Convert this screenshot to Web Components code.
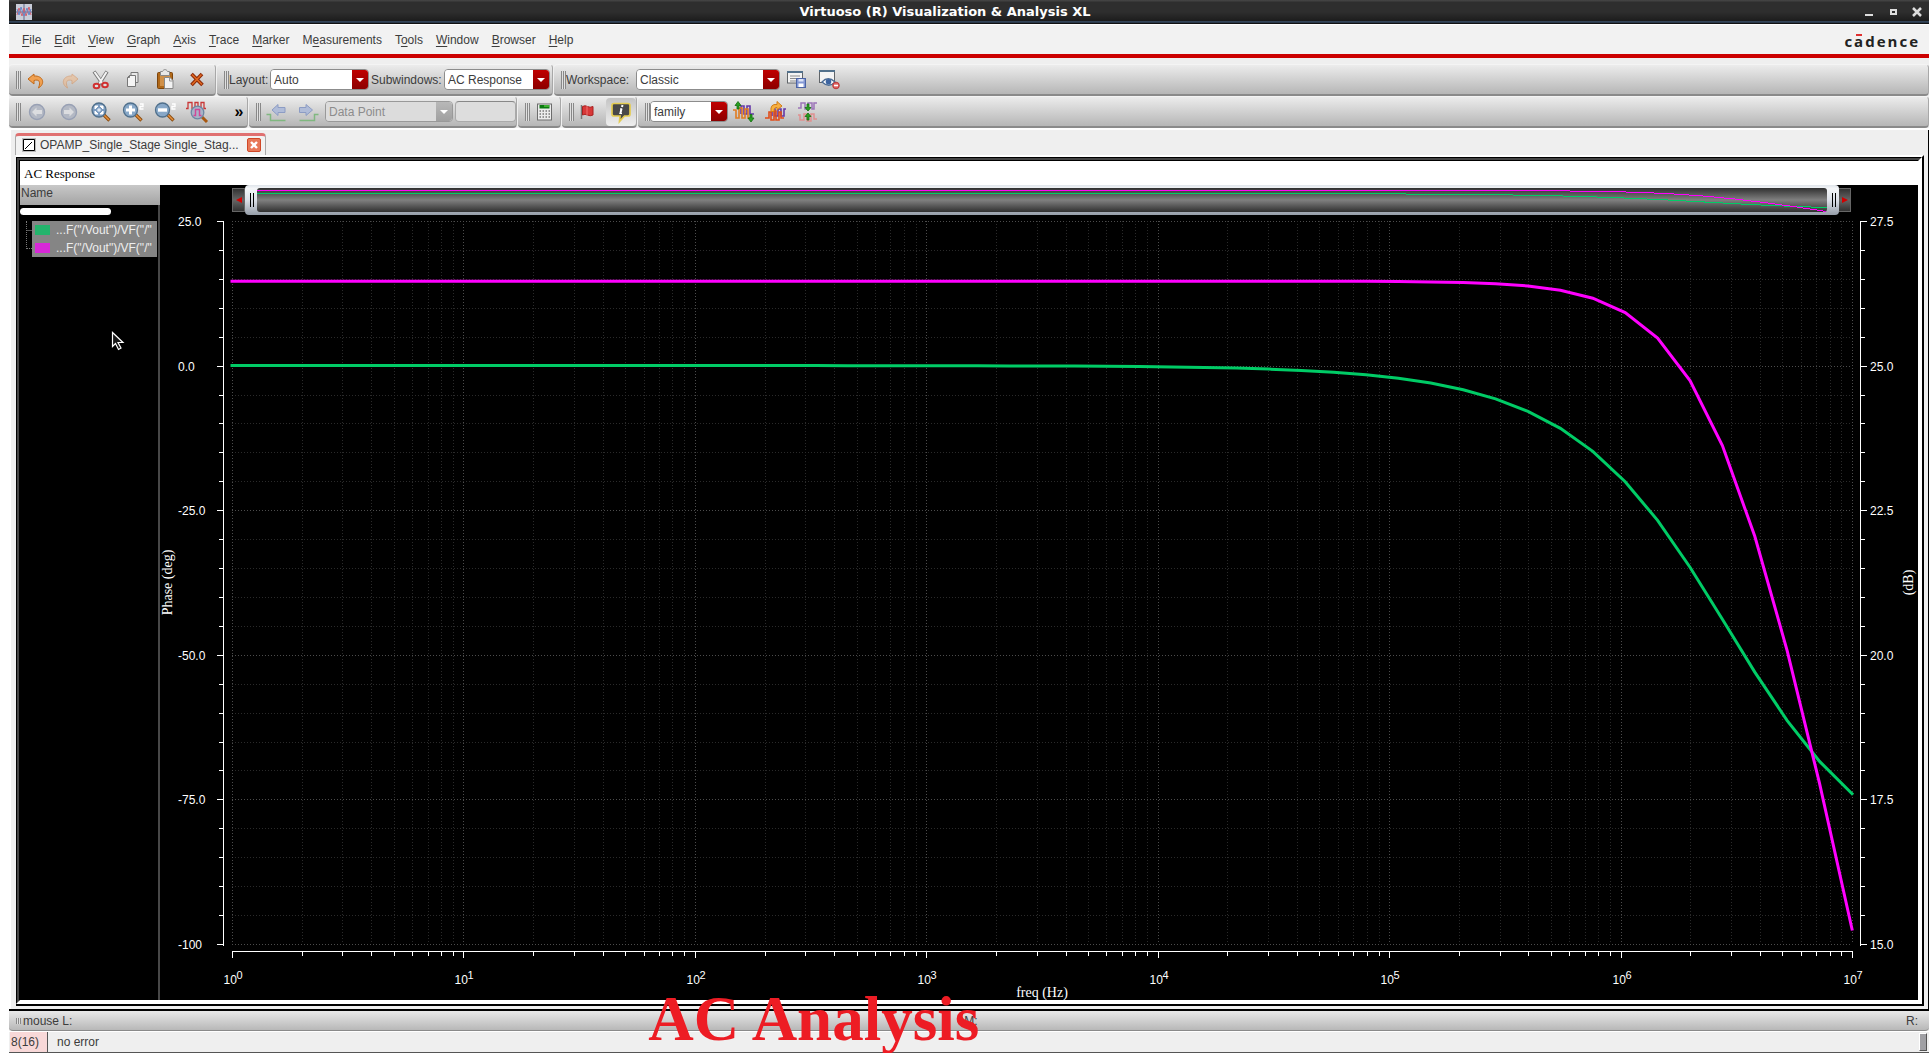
<!DOCTYPE html>
<html lang="en">
<head>
<meta charset="utf-8">
<title>Virtuoso (R) Visualization &amp; Analysis XL</title>
<style>
html,body{margin:0;height:100%;background:#fff;overflow:hidden}
body{font:12px/16px "Liberation Sans",Arial,sans-serif;color:#3c3c3c}
</style>
</head>
<body>
<viva-app></viva-app>
<script>
const ICONS = {
undo:'<path d="M9 6 3 11l6 5v-3.500c5-1.500 7 1 4.500 7.500 7-4 5-12.500-4.500-12z" fill="#f0a050" stroke="#c06818"/>',
redo:'<g opacity=".55"><path d="M15 6l6 5-6 5v-3.500c-5-1.500-7 1-4.500 7.500-7-4-5-12.500 4.500-12z" fill="#f0b888" stroke="#d89058"/></g>',
cut:'<path d="M5 3.500 14.500 17M18 3.500 9.500 17" stroke="#777" stroke-width="3.600"/><path d="M5.500 4 14 16M17.500 4 10 16" stroke="#f4f4f4" stroke-width="2"/><ellipse cx="7.500" cy="18" rx="2.800" ry="2.300" fill="#ddd" stroke="#d03030" stroke-width="2"/><ellipse cx="16" cy="17" rx="2.800" ry="2.300" fill="#ddd" stroke="#d03030" stroke-width="2"/>',
copy:'<path d="M10 4.500h7v10h-7z" fill="#e8e8e8" stroke="#777"/><path d="M6.500 9.500l2-2h6v11h-8z" fill="#f4f4f4" stroke="#777"/><path d="M6.500 9.500h2v-2" fill="none" stroke="#777"/>',
paste:'<rect x="4.500" y="4.500" width="15" height="16" rx="1" fill="#b06818" stroke="#7c440c"/><rect x="7" y="7" width="10" height="11" fill="#d09048"/><path d="M7.500 3.500h2c1-2.500 4-2.500 5 0h2v4h-9z" fill="#e8e8e8" stroke="#888"/><path d="M11.500 9.500h5.500l3 3v8h-8.500z" fill="#f2f2f2" stroke="#888"/><path d="M16.500 9.500v3.500H20" fill="none" stroke="#999"/>',
del:'<path d="M6.500 6 17.500 17M17 6 6.500 17" stroke="#8a2808" stroke-width="3.600"/><path d="M7 6.500 17 16.500M16.500 6.500 7 16.500" stroke="#e06820" stroke-width="1.600"/>',
back:'<circle cx="12" cy="12" r="7.500" fill="#b4b9c4" stroke="#98a0b4" stroke-width="1.400"/><path d="M11.500 7.500 7 12l4.500 4.500V14H17v-4h-5.500z" fill="#dcdde0"/>',
fwd:'<circle cx="12" cy="12" r="7.500" fill="#b4b9c4" stroke="#98a0b4" stroke-width="1.400"/><path d="M12.500 7.500 17 12l-4.500 4.500V14H7v-4h5.500z" fill="#dcdde0"/>',
fit:'<path d="M14 14l6.500 6.500" stroke="#8a4c10" stroke-width="3.400"/><path d="M14 14l6 6" stroke="#e8903c" stroke-width="1.400"/><circle cx="10" cy="10" r="7" fill="#7c9cc0" stroke="#50708c" stroke-width="1.300"/><path d="M6 6h3L6 9zM14 6v3l-3-3zM6 14v-3l3 3zM14 14h-3l3-3z" fill="#fff" stroke="#fff"/><circle cx="10" cy="10" r="1.800" fill="#dce8f4"/>',
zin:'<path d="M14 14l6.500 6.500" stroke="#8a4c10" stroke-width="3.400"/><path d="M14 14l6 6" stroke="#e8903c" stroke-width="1.400"/><circle cx="9.500" cy="10" r="7" fill="#88a8c8" stroke="#50708c" stroke-width="1.300"/><path d="M9.500 5.500v9M5 10h9" stroke="#fff" stroke-width="3"/><path d="M19 4h3v2.500h-3V9h3.500" fill="none" stroke="#fff" stroke-width="1.400"/>',
zout:'<path d="M14 14l6.500 6.500" stroke="#8a4c10" stroke-width="3.400"/><path d="M14 14l6 6" stroke="#e8903c" stroke-width="1.400"/><circle cx="9.500" cy="10" r="7" fill="#88a8c8" stroke="#50708c" stroke-width="1.300"/><path d="M5 10h9" stroke="#fff" stroke-width="3.400"/><path d="M19 4h3v2.500h-3V9h3.500" fill="none" stroke="#fff" stroke-width="1.400"/>',
zwave:'<path d="M1 8.500h2v-6h4v6h3v-6h3v6h3v-6h3v6h2" fill="none" stroke="#c83838" stroke-width="1.300"/><path d="M16 16l6 6" stroke="#a85810" stroke-width="3"/><circle cx="12.500" cy="12.500" r="6.300" fill="#a8b4c8" stroke="#6c88a4" stroke-width="1.300"/><path d="M8.500 15.500h2v-6h4v6h2" fill="none" stroke="#d04898" stroke-width="1.500"/>',
prev:'<path d="M1.500 14.500h4v6h15" fill="none" stroke="#80b880" stroke-width="1.500"/><path d="M13 4.500 7 10l6 5.500v-3h7v-5h-7z" fill="#b0bcd8" stroke="#8c9cc4"/>',
next:'<path d="M21.500 14.500h-4v6h-15" fill="none" stroke="#80b880" stroke-width="1.500"/><path d="M9 4.500l6.500 5.500L9 15.500v-3H2.500v-5H9z" fill="#b0bcd8" stroke="#8c9cc4"/>',
calc:'<rect x="5.500" y="4" width="14" height="16" fill="#ececec" stroke="#6c6c6c"/><rect x="7.500" y="5" width="10" height="3.500" fill="#0b7a10"/><path d="M12 6h5" stroke="#70e850"/><path d="M7.500 11h10.500M7.500 14h10.500M7.500 17h10.500" stroke="#777" stroke-width="1.500" stroke-dasharray="1.500 1.500"/>',
flag:'<path d="M6.500 5v14" stroke="#777" stroke-width="1.500"/><path d="M7.500 6.500q2.500-1.500 5 0t5.500 0V15q-3 1.500-5.500 0t-5 0z" fill="#d83838" stroke="#a82020"/><path d="M12 6v9.500" stroke="#f07070"/>',
info:'<path d="M5 3.500h14q2 0 2 2V14q0 2-2 2h-3.500l-5 5.500.5-5.500H5q-2 0-2-2V5.500q0-2 2-2z" fill="#484848" stroke="#e4cc50" stroke-width="1.700"/><path d="M13.500 5l-.5 2M12.500 8.500l-1.200 5.500" stroke="#fff" stroke-width="2"/><path d="M11 9h2M10.500 13.500h2.500" stroke="#fff"/>',
save:'<rect x="1.500" y="3.500" width="15" height="11.500" fill="#f4f4f4" stroke="#606468"/><path d="M1 4h16" stroke="#52718c" stroke-width="2"/><path d="M4 8h10M4 10.500h10M4 13h6" stroke="#8c8c8c"/><rect x="10.500" y="10.500" width="9" height="9" fill="#8498d4" stroke="#4c64a4"/><rect x="12.500" y="15.500" width="5" height="3.500" fill="#fff"/><rect x="12.500" y="11" width="5" height="2.500" fill="#dce4f8"/>',
view:'<rect x="1.500" y="2.500" width="15" height="12" fill="#f4f4f4" stroke="#606468"/><path d="M1 3h16" stroke="#52718c" stroke-width="2"/><path d="M4 14q6-6.500 13 0-6 6.500-13 0z" fill="#fff" stroke="#4c6c94" stroke-width="1.300"/><circle cx="10.500" cy="13.800" r="2.800" fill="#3c64a0"/><circle cx="18" cy="17.500" r="3.300" fill="#e06060" stroke="#b83838"/><path d="M16 17.500h4" stroke="#fff" stroke-width="1.600"/>',
strips:'<path d="M9 14V6h3v8h3V6h3v8h4" fill="none" stroke="#6438a8" stroke-width="1.600"/><path d="M1 10h3v8h3V8h3v10h3V9h3v9h3" fill="none" stroke="#e07c20" stroke-width="1.600"/><path d="M6 1.500 9 5.500H7V9H5V5.500H3zM19 22l-3-4h2v-3.500h2V18h2z" fill="#28a020" stroke="#146c10" stroke-width=".8"/>',
combine:'<path d="M8 16V9h3v7h3V9h3v7h3V9h2" fill="none" stroke="#6438a8" stroke-width="1.600"/><path d="M1 18h4v-6h2v8h3v-9h2v9h3v-8h2v6h3" fill="none" stroke="#e04c18" stroke-width="1.600"/><path d="M7 11.500q-1-8 6-7V1.500L18 6l-5 4V7.500q-3-.5-3 4z" fill="#f8b040" stroke="#d07c18"/>',
split:'<path d="M2 8h3V3h4v6h3V3h4v6h2V3h3" fill="none" stroke="#9c74b8" stroke-width="1.500"/><path d="M2 15h2v5h4v-6h3v7h4v-7h3v5h3" fill="none" stroke="#e09090" stroke-width="1.500"/><path d="M12 11 9 7.500h2V4h2v3.500h2zM12 13l3 3.500h-2V20h-2v-3.500H9z" fill="#28a020" stroke="#146c10" stroke-width=".8"/>'
};
const define=(name,html,setup)=>{
  const t=document.createElement('template');t.innerHTML=html;
  customElements.define(name,class extends HTMLElement{
    connectedCallback(){
      if(this.shadowRoot)return;
      this.attachShadow({mode:'open'}).append(t.content.cloneNode(true));
      if(setup)setup(this,this.shadowRoot);
    }
  });
};
const SVGN='http://www.w3.org/2000/svg';
const svgEl=(svg,n,a,text)=>{const e=document.createElementNS(SVGN,n);for(const k in a)e.setAttribute(k,a[k]);if(text!=null)e.textContent=text;svg.append(e);return e;};

/* Single pole response sampled at 50 intervals over 7 decades */
const POLE=2.865e6;
const SAMPLES=Array.from({length:51},(_,i)=>{
  const d=i*7/50,r=10**d/POLE;
  return{d,phase:-Math.atan(r)*180/Math.PI,gain:26.46-10*Math.log10(1+r*r)};
});

define('viva-icon-button',`<style>
:host{display:block}
button{display:grid;place-items:center;width:var(--w,32px);height:30px;padding:0;border:0;border-radius:4px;background:none}
:host([pressed]) button{width:30px;height:28px;background:linear-gradient(#c4c4c4,#efefef)}
svg{display:block;width:24px;height:24px;fill:none}
</style><button type="button"><svg viewBox="0 0 24 24"></svg></button>`,(h,r)=>{
  r.querySelector('svg').innerHTML=ICONS[h.getAttribute('icon')];
  r.querySelector('button').setAttribute('aria-label',h.getAttribute('icon'));
});

define('viva-combo',`<style>
:host{display:flex;align-items:center;gap:1px}
label{white-space:nowrap;min-width:var(--label,0)}
label:empty{display:none}
.box{display:grid;width:var(--w);box-sizing:border-box;height:21px;border:1px solid #8c8c8c;border-radius:4px;overflow:hidden;background:#fff}
.box>*{grid-area:1/1}
select{appearance:none;border:0;margin:0;padding:0 18px 0 3px;width:100%;font:inherit;color:#3c3c3c;background:linear-gradient(#c00000,#8c0000) right/16px 100% no-repeat #fff;opacity:1}
i{justify-self:end;align-self:center;margin-right:4px;border:4px solid transparent;border-top-color:#fff;border-bottom:0;pointer-events:none}
:host([disabled]) .box{background:#ddd;border-color:#999}
:host([disabled]) select{color:#8c8c8c;background:linear-gradient(#b8b8b8,#a0a0a0) right/16px 100% no-repeat #dcdcdc}
</style><label for="s"></label><div class="box"><select id="s"><option></option></select><i></i></div>`,(h,r)=>{
  r.querySelector('label').textContent=h.getAttribute('label')||'';
  r.querySelector('option').textContent=h.getAttribute('value');
  const s=r.querySelector('select');
  s.disabled=h.hasAttribute('disabled');
  if(!h.hasAttribute('label'))s.setAttribute('aria-label',h.getAttribute('value'));
});

define('viva-toolgroup',`<style>
:host{display:flex;align-items:center;box-sizing:border-box;height:32px;padding:0 var(--end,2px) 0 7px;border-bottom:2px solid #8a8a8a;border-top:1px solid #f4f4f4;border-right:1px solid #a8a8a8;border-radius:4px;background:linear-gradient(#ececec,#b6b6b6)}
:host([grow]){flex:1}
.grip{flex:none;width:5px;height:18px;background:repeating-linear-gradient(90deg,#888 0 1px,#e0e0e0 1px 2px)}
</style><div class="grip"></div><slot></slot>`);

define('viva-titlebar',`<style>
:host{display:flex;align-items:center;height:24px;box-sizing:border-box;padding:0 7px;color:#fff;background:linear-gradient(#484848,#2e2e2e 10%,#2e2e2e 50%,#1c1c1c 88%,#4a6a90 91%,#111 96%)}
h1{flex:1;margin:0;text-align:center;font:bold 13px/20px "DejaVu Sans",sans-serif}
.logo{width:16px;height:16px;flex:none}
nav{display:flex;justify-content:flex-end;gap:14px;width:64px}
button{width:10px;height:12px;padding:0;border:0;background:none;display:grid;place-items:center}
button svg{width:10px;height:10px;fill:none;stroke:#ddd;stroke-width:2}
</style>
<svg class="logo" viewBox="0 0 16 16"><rect width="16" height="16" fill="#c8ccd8"/><path d="M8 0v16M0 8h16" stroke="#606888"/><path d="M1 11 3 4l3 8 2-8 2 8 3-9 2 8" fill="none" stroke="#d06070"/><path d="M1 5l2 6 2-8 3 9 3-8 2 7 2-6" fill="none" stroke="#6888c8"/></svg>
<h1>Virtuoso (R) Visualization &amp; Analysis XL</h1>
<nav><button aria-label="Minimize"><svg><path d="M1 8h8"/></svg></button><button aria-label="Maximize"><svg><path d="M3 3h5v4H3z"/></svg></button><button aria-label="Close"><svg><path d="M1 1l8 8M9 1 1 9" stroke-width="2.500"/></svg></button></nav>`);

define('viva-menubar',`<style>
:host{display:flex;align-items:center;justify-content:space-between;height:34px;box-sizing:border-box;padding:0 11px 0 13px;background:#f2f2f2;border-top:1px solid #fff;border-bottom:4px solid #c00}
nav{display:flex;gap:13px}
button{font:inherit;color:inherit;border:0;padding:0;background:none}
u{text-underline-offset:2px}
.brand{font:bold 15px/24px "Open Sans",sans-serif;color:#222;display:flex;gap:2px;padding-top:3px}
.a{background:linear-gradient(#e03030,#e03030) center 5px/6px 2px no-repeat}
</style><nav></nav><div class="brand"><span>c</span><span class="a">a</span><span>d</span><span>e</span><span>n</span><span>c</span><span>e</span></div>`,(h,r)=>{
  r.querySelector('nav').innerHTML=['_File','_Edit','_View','_Graph','_Axis','_Trace','_Marker','M_easurements','T_ools','_Window','_Browser','_Help']
    .map(m=>`<button type="button">${m.replace(/_(.)/,'<u>$1</u>')}</button>`).join('');
});

define('viva-tab',`<style>
:host{display:flex;align-items:center;box-sizing:border-box;width:251px;height:22px;margin-left:-1px;padding:0 4px 2px 6px;gap:4px;border:1px solid #aaa;border-top:3px solid #e07070;border-bottom:0;border-radius:4px 4px 0 0;background:#f2f2f2;white-space:nowrap}
svg{flex:none;width:14px;height:14px}
span{flex:1}
button{flex:none;width:14px;height:14px;padding:0;border:1px solid #d04828;border-radius:2px;background:#e87858;display:grid;place-items:center}
button svg{width:8px;height:8px}
</style><svg viewBox="0 0 14 14"><path d="M0 0h14v14H0z" fill="#bbb"/><path d="M1.500 1.500h11v11h-11z" fill="#fff" stroke="#000"/><path d="M3 11 10 4" stroke="#000"/></svg><span><slot></slot></span><button aria-label="Close tab"><svg><path d="M1 1l6 6M7 1 1 7" stroke="#fff" stroke-width="2.400"/></svg></button>`);

define('viva-legend',`<style>
:host{display:block;width:138px;border-right:2px solid #484848;background:#000}
h2{margin:0 -2px 0 0;height:20px;padding-left:1px;font:inherit;line-height:16px;background:linear-gradient(#c8c8c8,#a4a4a4)}
.scroll{width:91px;height:7px;margin:3px 0 6px;border-radius:4px;background:#fff}
ul{list-style:none;margin:0 1px 0 6px;padding:0 0 0 6px;position:relative}
ul::before{content:"";position:absolute;left:0;top:0;width:5px;height:27px;border:1px dotted #777;border-width:0 0 1px 1px;background:linear-gradient(#555,#555) 0 9px/100% 1px no-repeat}
li{display:flex;align-items:center;gap:6px;height:18px;padding-left:3px;color:#eee;background:#858585;overflow:hidden;white-space:nowrap}
li i{flex:none;width:15px;height:10px;background:var(--c)}
.cursor{display:block;width:14px;height:20px;margin:74px 0 0 91px}
</style><h2>Name</h2><div class="scroll"></div>
<ul><li style="--c:#24b46c"><i></i>...F("/Vout")/VF("/"</li><li style="--c:#d828d8"><i></i>...F("/Vout")/VF("/"</li></ul>
<svg class="cursor" viewBox="0 0 14 20"><path d="M1.500 1.500v14l3-3 3 6 2.500-1.500-3-5.500H12z" fill="#181818" stroke="#fff" stroke-width="1.200"/></svg>`);

define('viva-range',`<style>
:host{display:flex;align-items:center;height:30px;padding:0 67px 0 72px}
.end{flex:none;display:grid;place-items:center;width:11px;height:22px;border:1px solid #666;background:linear-gradient(#333,#666,#333)}
.end svg{width:6px;height:6px;fill:#d00000}
.end:first-child{border-right:0}.end:last-child{border-left:0}
.thumb{flex:1;display:flex;box-sizing:border-box;height:30px;border-radius:4px;padding:3px 0 3px;background:linear-gradient(#dfe4ea,#f4f6f8 12%,#dce0e8 50%,#959da8)}
.grip{flex:none;width:12px;height:14px;align-self:center;background:linear-gradient(#000,#000) 5px 0/1px 100% no-repeat,linear-gradient(#000,#000) 8px 0/1px 100% no-repeat}
.track{flex:1;min-width:0;height:24px;border-radius:3px;background:linear-gradient(#303030,#808080 50%,#303030);overflow:hidden}
.track svg{display:block;width:100%;height:24px;fill:none;shape-rendering:crispEdges}
</style><div class="end"><svg viewBox="0 0 6 6"><path d="M0 3 6 0v6z"/></svg></div><div class="thumb"><div class="grip"></div><div class="track"><svg preserveAspectRatio="none" viewBox="0 0 7 24"></svg></div><div class="grip"></div></div><div class="end"><svg viewBox="0 0 6 6"><path d="M6 3 0 0v6z"/></svg></div>`,(h,r)=>{
  const s=r.querySelector('.track svg');
  const line=(c,f)=>svgEl(s,'polyline',{stroke:c,'vector-effect':'non-scaling-stroke',points:SAMPLES.map(p=>p.d+','+f(p)).join(' ')});
  line('#00cc66',p=>5.5-p.phase*.19);
  line('#ff00ff',p=>2.5+(26.46-p.gain)*1.88);
});

define('viva-plot',`<style>
:host{display:block;flex:1;min-height:0;overflow:hidden}
svg{display:block;width:100%;height:100%;fill:none}
text{fill:#fff;font:12px "Liberation Sans",Arial,sans-serif}
.serif{font:14px "Liberation Serif",serif}
.sup{font-size:11px}
</style><svg></svg>`,(h,r)=>{
  const s=r.querySelector('svg');
  const draw=()=>{
    const W=h.clientWidth,H=h.clientHeight;if(!W||!H)return;
    s.replaceChildren();
    const L=72,R=W-66,T=6,B=H-56,R2=Math.round;
    const X=d=>L+(R-L)*d/7,Y=f=>T+(B-T)*f;
    const ln=(x1,y1,x2,y2,o)=>svgEl(s,'line',{x1,y1,x2,y2,'shape-rendering':'crispEdges',...o});
    const white={stroke:'#fff','stroke-width':1};
    for(let i=0;i<=25;i++){
      const y=R2(Y(i/25))+.5,maj=i%5===0;
      ln(L,y,R,y,{stroke:maj?'#4c4c4c':'#2a2a2a','stroke-dasharray':'1 2'});
      ln(maj?57:59,y,63,y,white);
      ln(R+9,y,R+(maj?15:13),y,white);
      if(maj){
        svgEl(s,'text',{x:18,y:y+4},['25.0','0.0','-25.0','-50.0','-75.0','-100'][i/5]);
        svgEl(s,'text',{x:R+18,y:y+4},['27.5','25.0','22.5','20.0','17.5','15.0'][i/5]);
      }
    }
    for(let d=0;d<=7;d++)for(let m=1;m<10&&(d<7||m===1);m++){
      const x=R2(X(d+Math.log10(m)))+.5,maj=m===1;
      ln(x,T,x,B,{stroke:maj?'#4c4c4c':'#2a2a2a','stroke-dasharray':'1 2'});
      ln(x,B+7,x,B+(maj?14:12),white);
      if(maj){
        svgEl(s,'text',{x:x-9,y:B+40},'10');
        svgEl(s,'text',{x:x+4,y:B+35,class:'sup'},d);
      }
    }
    ln(63.5,T,63.5,B+2,white);ln(R+8.5,T,R+8.5,B+2,white);ln(L,B+7.5,R+1,B+7.5,white);
    const curve=(c,f)=>svgEl(s,'polyline',{stroke:c,'stroke-width':3,'stroke-linecap':'square',points:SAMPLES.map(p=>X(p.d).toFixed(1)+','+Y(f(p)).toFixed(1)).join(' ')});
    curve('#00cc66',p=>(25-p.phase)/125);
    curve('#ff00ff',p=>(27.5-p.gain)/12.5);
    const mid=(T+B)/2,cx=(L+R)/2;
    svgEl(s,'text',{class:'serif',transform:`translate(12 ${mid}) rotate(-90)`,'text-anchor':'middle'},'Phase (deg)');
    svgEl(s,'text',{class:'serif',transform:`translate(${R+61} ${mid}) rotate(-90)`,'text-anchor':'middle'},'(dB)');
    svgEl(s,'text',{class:'serif',x:cx,y:B+53,'text-anchor':'middle'},'freq (Hz)');
  };
  new ResizeObserver(draw).observe(h);draw();
});

define('viva-statusbar',`<style>
:host{display:block}
.mouse{display:grid;grid-template-columns:1fr auto 1fr;align-items:center;box-sizing:border-box;height:20px;padding:0 11px 0 7px;border-bottom:1px solid #8a8a8a;border-radius:0 0 4px 4px;background:linear-gradient(#e8e8e8,#b8b8b8)}
.mouse span:nth-child(2){padding-left:8px}
.mouse span:last-child{text-align:right}
.mouse span:first-child::before{content:"";display:inline-block;width:5px;height:6px;margin-right:2px;vertical-align:1px;background:repeating-linear-gradient(90deg,#888 0 1px,#e0e0e0 1px 2px)}
.msg{display:flex;align-items:stretch;height:22px;line-height:20px;background:#efefef;border-bottom:1px solid #555;border-top:1px solid #fff;box-sizing:border-box}
.count{width:36px;margin-left:1px;padding-left:1px;background:#f8d8d8;border-right:1px solid #555;flex:none}
.note{flex:1;padding-left:9px}
.size{width:6px;height:16px;align-self:center;margin-right:2px;background:#a0a0a4;border:1px solid #fff;border-right-color:#555;border-bottom-color:#555}
</style><div class="mouse"><span>mouse L:</span><span>M:</span><span>R:</span></div>
<div class="msg"><div class="count">8(16)</div><div class="note">no error</div><div class="size"></div></div>`);

define('viva-app',`<style>
:host{display:flex;flex-direction:column;height:100vh;margin-left:9px;background:#efefef;position:relative}
.bars{padding-top:6px;display:flex;flex-direction:column}
.row{display:flex;gap:1px}
.icons{display:flex;align-items:center}
.more{font:bold 16px/20px "Liberation Sans",sans-serif;color:#000;border:0;background:none;padding:0;width:12px;margin-left:20px}
.val{width:61px;height:21px;box-sizing:border-box;margin:0 0 0 2px;border:1px solid #aaa;border-top-color:#888;border-radius:4px;background:#ddd}
.area{flex:1;min-height:0;display:flex;flex-direction:column;margin-top:2px;padding:3px 4px 3px 7px;border-right:1px solid #000;border-bottom:2px solid #000;box-shadow:inset 2px 0 #fff,0 -2px #fff}
.outer{flex:1;min-height:0;display:flex;border:solid #000;border-width:0 2px 2px 0;border-top:2px solid #fff}
.inner{flex:1;min-width:0;display:flex;flex-direction:column;border:4px solid #fff;border-top:4px double #000;border-left:4px double #000;background:#444}
.inner>*{background:#000}
h3{margin:0;height:24px;padding:0 4px;font:13px/26px "Liberation Serif",serif;color:#000;background:#fff!important}
.body{flex:1;min-height:0;display:flex}
.chart{flex:1;min-width:0;display:flex;flex-direction:column}
.caption{position:absolute;left:33.300%;bottom:8px;margin:0;font:bold 63px/52px "Liberation Serif",serif;color:#ed1c24;white-space:nowrap}
</style>
<viva-titlebar></viva-titlebar><viva-menubar></viva-menubar>
<div class="bars">
<div class="row">
<viva-toolgroup><div class="icons"><viva-icon-button icon="undo"></viva-icon-button><viva-icon-button icon="redo"></viva-icon-button><viva-icon-button icon="cut"></viva-icon-button><viva-icon-button icon="copy"></viva-icon-button><viva-icon-button icon="paste"></viva-icon-button><viva-icon-button icon="del"></viva-icon-button></div></viva-toolgroup>
<viva-toolgroup><viva-combo label="Layout:" value="Auto" style="--label:40px;--w:99px"></viva-combo><viva-combo label="Subwindows:" value="AC Response" style="--label:72px;--w:106px;margin-left:2px"></viva-combo></viva-toolgroup>
<viva-toolgroup grow><viva-combo label="Workspace:" value="Classic" style="--label:69px;--w:144px"></viva-combo><div class="icons" style="padding-left:2px"><viva-icon-button icon="save"></viva-icon-button><viva-icon-button icon="view"></viva-icon-button></div></viva-toolgroup>
</div>
<div class="row">
<viva-toolgroup><div class="icons"><viva-icon-button icon="back"></viva-icon-button><viva-icon-button icon="fwd"></viva-icon-button><viva-icon-button icon="fit"></viva-icon-button><viva-icon-button icon="zin"></viva-icon-button><viva-icon-button icon="zout"></viva-icon-button><viva-icon-button icon="zwave"></viva-icon-button></div><button class="more">»</button></viva-toolgroup>
<viva-toolgroup style="--end:0px"><div class="icons"><viva-icon-button icon="prev"></viva-icon-button><viva-icon-button icon="next"></viva-icon-button></div><viva-combo value="Data Point" disabled style="--w:128px"></viva-combo><input class="val" aria-label="Value" disabled></viva-toolgroup>
<viva-toolgroup><viva-icon-button icon="calc" style="--w:28px"></viva-icon-button></viva-toolgroup>
<viva-toolgroup style="--end:0px"><viva-icon-button icon="flag" style="--w:26px;margin-right:6px"></viva-icon-button><viva-icon-button icon="info" pressed></viva-icon-button></viva-toolgroup>
<viva-toolgroup grow><viva-combo value="family" style="--w:78px"></viva-combo><div class="icons"><viva-icon-button icon="strips"></viva-icon-button><viva-icon-button icon="combine"></viva-icon-button><viva-icon-button icon="split"></viva-icon-button></div></viva-toolgroup>
</div>
</div>
<div class="area"><viva-tab>OPAMP_Single_Stage Single_Stag...</viva-tab>
<div class="outer"><div class="inner"><h3>AC Response</h3><div class="body"><viva-legend></viva-legend><div class="chart"><viva-range></viva-range><viva-plot></viva-plot></div></div></div></div>
</div>
<viva-statusbar></viva-statusbar>
<p class="caption">AC Analysis</p>`);
</script>
</body>
</html>
